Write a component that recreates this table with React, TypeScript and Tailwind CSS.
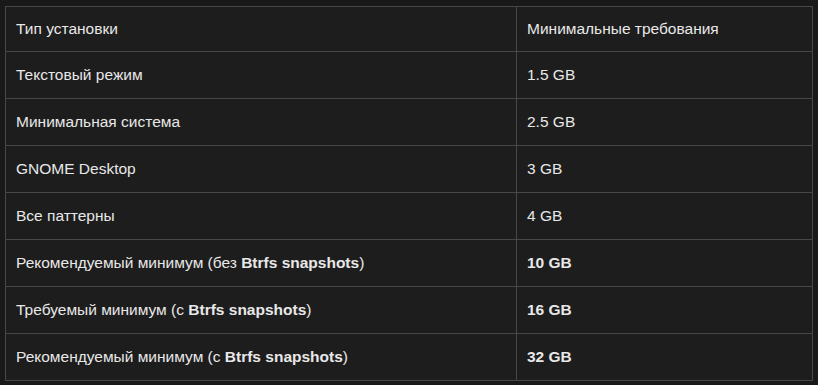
import React from "react";

const rows: { a: React.ReactNode; b: React.ReactNode; boldB?: boolean }[] = [
  { a: "Текстовый режим", b: "1.5 GB" },
  { a: "Минимальная система", b: "2.5 GB" },
  { a: "GNOME Desktop", b: "3 GB" },
  { a: "Все паттерны", b: "4 GB" },
  {
    a: (
      <>
        Рекомендуемый минимум (без <b className="font-bold">Btrfs snapshots</b>)
      </>
    ),
    b: "10 GB",
    boldB: true,
  },
  {
    a: (
      <>
        Требуемый минимум (с <b className="font-bold">Btrfs snapshots</b>)
      </>
    ),
    b: "16 GB",
    boldB: true,
  },
  {
    a: (
      <>
        Рекомендуемый минимум (с <b className="font-bold">Btrfs snapshots</b>)
      </>
    ),
    b: "32 GB",
    boldB: true,
  },
];

export default function App() {
  return (
    <div
      className="w-[818px] h-[385px] bg-[#191919] pt-[6px] pl-[5px]"
      style={{ fontFamily: '"Liberation Sans", Arial, sans-serif' }}
    >
      <table className="border-collapse w-[808px] text-[15.5px] text-[#e8e8e8] bg-[#1d1d1d]">
        <tbody>
          <tr className="h-[45px]">
            <td className="border border-[#474747] px-[10px] w-[511px] align-middle">Тип установки</td>
            <td className="border border-[#474747] px-[10px] align-middle">Минимальные требования</td>
          </tr>
          {rows.map((r, i) => (
            <tr key={i} className="h-[47px]">
              <td className="border border-[#474747] px-[10px] align-middle">{r.a}</td>
              <td className={"border border-[#474747] px-[10px] align-middle " + (r.boldB ? "font-bold" : "")}>
                {r.b}
              </td>
            </tr>
          ))}
        </tbody>
      </table>
    </div>
  );
}
